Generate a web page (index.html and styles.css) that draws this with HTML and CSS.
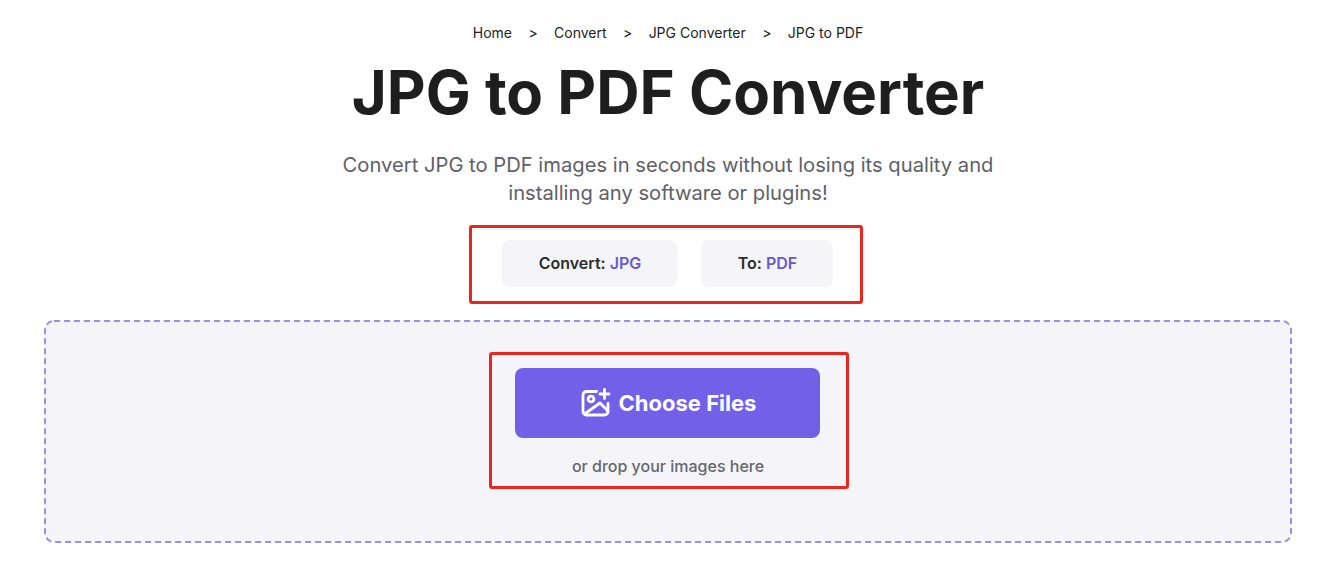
FILE: index.html
```html
<!DOCTYPE html>
<html lang="en">
<head>
  <meta charset="UTF-8">
  <meta name="viewport" content="width=device-width, initial-scale=1.0">
  <title>JPG to PDF Converter</title>
  <link rel="stylesheet" href="styles.css">
</head>
<body>
  <div class="crumbs">
    <a>Home</a>
    <span>&gt;</span>
    <a>Convert</a>
    <span>&gt;</span>
    <a>JPG Converter</a>
    <span>&gt;</span>
    <a>JPG to PDF</a>
  </div>
  <h1 class="title">JPG to PDF Converter</h1>
  <p class="intro">Convert JPG to PDF images in seconds without losing its quality and<br>installing any software or plugins!</p>
  <div class="formats">
    <div class="format format-from">Convert: <b>JPG</b></div>
    <div class="format format-to">To: <b>PDF</b></div>
  </div>
  <div class="dropzone">
    <svg class="dropzone-edge" viewBox="0 0 1248 223" fill="none">
      <rect x="1" y="1" width="1246" height="221" rx="9" stroke="#9d8fe0" stroke-width="2" stroke-dasharray="6 4"/>
    </svg>
    <div class="upload">
      <button class="choose-btn">
        <svg class="choose-icon" viewBox="0 0 30 30" fill="none" stroke="#fff" stroke-width="2.800" stroke-linecap="round" stroke-linejoin="round">
          <path d="M15.500 3.500H5.500a3.500 3.500 0 0 0-3.500 3.500v16.500a3.500 3.500 0 0 0 3.500 3.500h18a3.500 3.500 0 0 0 3.500-3.500V15.500"/>
          <path d="M23.500 1.500v9M19 6h9"/>
          <circle cx="10" cy="11" r="2.900"/>
          <path d="M3.500 26 19 15l8 8"/>
        </svg>
        Choose Files
      </button>
      <div class="drop-hint">or drop your images here</div>
    </div>
  </div>
</body>
</html>
```

FILE: styles.css
```css
* {
  box-sizing: border-box;
}
body {
  margin: 0;
  background-color: #fff;
  font-family: Inter, "Liberation Sans", sans-serif;
  color: #1e1e1e;
}
.crumbs {
  display: flex;
  justify-content: center;
  gap: 16.4px;
  padding-top: 25px;
  font-size: 14px;
  line-height: 16px;
  color: #222;
}
.title {
  margin: 15px 0 0;
  text-align: center;
  font-size: 60px;
  line-height: 72px;
  font-weight: 700;
  color: #1e1e1e;
}
.intro {
  margin: 23px 0 0;
  text-align: center;
  font-size: 20.2px;
  line-height: 28px;
  color: #5f6068;
}
.formats {
  display: flex;
  justify-content: center;
  gap: 24px;
  width: 394px;
  height: 79px;
  margin: 18px 0 0 469px;
  padding: 12px 0 0 2px;
  border: 3px solid #e8281e;
  border-radius: 3px;
}
.format {
  height: 47px;
  padding-left: 2px;
  background-color: #f5f5f8;
  border-radius: 8px;
  font-size: 16px;
  font-weight: 600;
  line-height: 47px;
  text-align: center;
  color: #2b2b31;
}
.format b {
  font-weight: 600;
  color: #6a5acd;
}
.format-from {
  width: 175px;
}
.format-to {
  width: 132px;
}
.dropzone {
  position: relative;
  width: 1248px;
  height: 223px;
  margin: 16px 0 0 44px;
  padding-top: 32px;
  background-color: #f5f5f9;
  border-radius: 10px;
}
.dropzone-edge {
  position: absolute;
  top: 0;
  left: 0;
  width: 1248px;
  height: 223px;
}
.upload {
  position: relative;
  width: 360px;
  height: 137px;
  margin: 0 0 0 445px;
  padding-top: 13px;
  border: 3px solid #e8281e;
  border-radius: 3px;
  text-align: center;
}
.choose-btn {
  display: flex;
  align-items: center;
  justify-content: center;
  gap: 8px;
  width: 305px;
  height: 70px;
  margin: 0 0 0 23px;
  padding: 0 0 0 2px;
  background-color: #7360e8;
  border: 0;
  border-radius: 8px;
  font-family: inherit;
  font-size: 22px;
  font-weight: 700;
  color: #fff;
}
.choose-icon {
  width: 30px;
  height: 30px;
}
.drop-hint {
  margin-top: 18px;
  padding-right: 2px;
  font-size: 16px;
  line-height: 20px;
  font-weight: 450;
  color: #65666e;
}
```
